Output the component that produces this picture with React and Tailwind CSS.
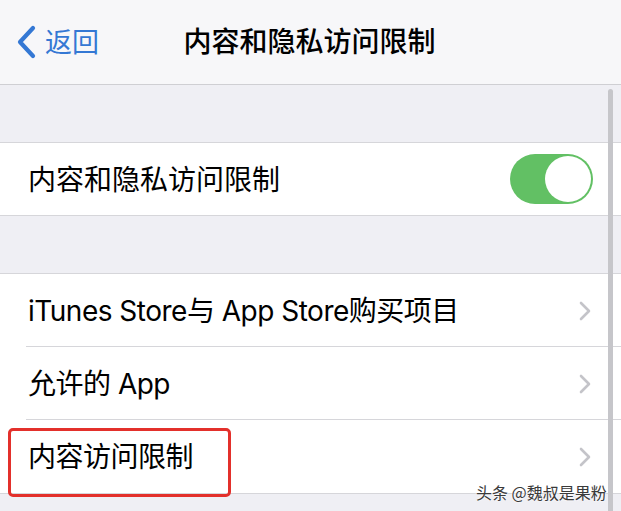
import React from 'react';

const Chevron = () => (
    <svg width="14" height="22" viewBox="0 0 14 22" className="mr-[29px]">
        <polyline points="3,3 11,11 3,19" fill="none" stroke="#c4c4c9" strokeWidth="2.6" strokeLinecap="round" strokeLinejoin="round" />
    </svg>
);

const Row = ({ label, last, boxed }) => (
    <div className="relative h-[73px] flex items-center justify-between bg-white">
        <span className="pl-[28px] text-[28px] text-black leading-none tracking-[-0.5px]">{label}</span>
        <Chevron />
        {!last && <div className="absolute left-[26px] right-0 bottom-0 h-px bg-[#d6d6da]" />}
        {boxed && (
            <div className="absolute left-[8px] top-[8px] w-[223px] h-[69px] border-[3px] border-[#e3302b] rounded-[5px]" />
        )}
    </div>
);

export default function App() {
    return (
        <div className="relative w-[621px] h-[511px] overflow-hidden bg-[#efeff4] font-['Inter','Noto_Sans_CJK_SC',sans-serif]">
            {/* --- 导航栏 --- */}
            <header className="relative h-[85px] bg-[#f7f7f9] border-b border-[#cfcfd3] flex items-center">
                <div className="flex items-center pl-[15px] text-[#3478d4]">
                    <svg width="22" height="34" viewBox="0 0 22 34">
                        <polyline points="18,3 5,17 18,31" fill="none" stroke="#3478d4" strokeWidth="4.2" strokeLinecap="round" strokeLinejoin="round" />
                    </svg>
                    <span className="ml-[8px] text-[27px] leading-none">返回</span>
                </div>
                <h1 className="absolute left-0 right-0 text-center text-[28px] leading-none text-black font-medium pr-[2px]">
                    内容和隐私访问限制
                </h1>
            </header>

            <div className="h-[57px]" />

            {/* --- 开关 --- */}
            <div className="h-[74px] bg-white border-y border-[#d6d6da] flex items-center justify-between">
                <span className="pl-[28px] pt-[2px] text-[28px] leading-none text-black">内容和隐私访问限制</span>
                <div className="mr-[28px] w-[83px] h-[50px] rounded-full bg-[#62c064] flex items-center justify-end pr-[2px]">
                    <div className="w-[46px] h-[46px] rounded-full bg-white" />
                </div>
            </div>

            <div className="h-[57px]" />

            {/* --- 列表 --- */}
            <div className="border-y border-[#d6d6da]">
                <Row label="iTunes Store与 App Store购买项目" />
                <Row label="允许的 App" />
                <Row label="内容访问限制" last boxed />
            </div>

            {/* --- 滚动条 --- */}
            <div className="absolute left-[608px] top-[89px] w-[5px] h-[430px] rounded-full bg-[#c6c6ca]" />

            {/* --- 水印 --- */}
            <div className="absolute left-[476px] top-[484px] text-[16px] leading-none text-[#3a3a3a] font-['Noto_Sans_CJK_SC',sans-serif] [text-shadow:0_0_2px_#fff,0_0_2px_#fff]">
                头条 @魏叔是果粉
            </div>
        </div>
    );
}
